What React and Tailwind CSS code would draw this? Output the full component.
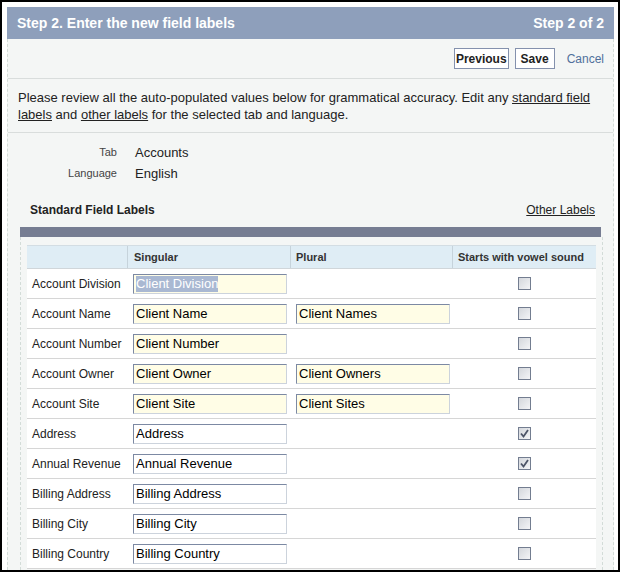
import React from 'react';

const rows = [
    {label: 'Account Division', singular: 'Client Division', plural: null, yellow: true, selected: true},
    {label: 'Account Name', singular: 'Client Name', plural: 'Client Names', yellow: true},
    {label: 'Account Number', singular: 'Client Number', plural: null, yellow: true},
    {label: 'Account Owner', singular: 'Client Owner', plural: 'Client Owners', yellow: true},
    {label: 'Account Site', singular: 'Client Site', plural: 'Client Sites', yellow: true},
    {label: 'Address', singular: 'Address', plural: null, checked: true},
    {label: 'Annual Revenue', singular: 'Annual Revenue', plural: null, checked: true},
    {label: 'Billing Address', singular: 'Billing Address', plural: null},
    {label: 'Billing City', singular: 'Billing City', plural: null},
    {label: 'Billing Country', singular: 'Billing Country', plural: null},
];

function TextBox({value, yellow, selected}) {
    return (
        <div
            className={`w-[154px] h-[20px] flex items-center pl-[2px] text-[13px] text-black border border-t-[#7c89a3] border-l-[#7c89a3] border-r-[#ccd3dc] border-b-[#ccd3dc] ${yellow ? 'bg-[#fffde6]' : 'bg-white'}`}>
            {selected
                ? <span className="bg-[#a9b8d2] text-white leading-[16px]">{value}</span>
                : <span>{value}</span>}
        </div>
    );
}

function Checkbox({checked}) {
    return (
        <div className="w-[13px] h-[13px] border border-[#737d90] bg-gradient-to-br from-[#d4d7dc] to-[#f4f5f7] flex items-center justify-center">
            {checked && (
                <svg width="9" height="9" viewBox="0 0 9 9">
                    <path d="M1 4.5 L3.5 7.5 L8 1" fill="none" stroke="#4d5568" strokeWidth="1.8"/>
                </svg>
            )}
        </div>
    );
}

export default function App() {
    return (
        <div
            className="w-[620px] h-[572px] border-2 border-black bg-white pt-[5px] pl-[5px] pr-[4px] flex flex-col overflow-hidden"
            style={{fontFamily: '"Liberation Sans", Arial, sans-serif'}}>
            {/* Title bar */}
            <div className="h-[32px] shrink-0 bg-[#8e9fbb] flex items-center justify-between px-[10px] text-white font-bold text-[14px]">
                <span>Step 2. Enter the new field labels</span>
                <span>Step 2 of 2</span>
            </div>

            {/* Body */}
            <div className="flex-1 bg-[#f4f6f5] border-l border-r border-dashed border-[#d3dcd8] flex flex-col overflow-hidden">
                {/* Buttons */}
                <div className="h-[40px] shrink-0 flex items-center justify-end pr-[9px] border-b border-[#d9dddc]">
                    <button className="h-[21px] px-[1px] bg-white border border-[#8491ad] text-[12px] font-bold text-[#222]">Previous</button>
                    <button className="ml-[6px] h-[21px] px-[5px] bg-white border border-[#8491ad] text-[12px] font-bold text-[#222]">Save</button>
                    <span className="ml-[12px] text-[12px] text-[#50709b]">Cancel</span>
                </div>

                {/* Description */}
                <div className="shrink-0 pl-[10px] pr-[14px] pt-[10px] pb-[9px] text-[13px] leading-[17px] text-[#222] border-b border-[#d9dddc]">
                    Please review all the auto-populated values below for grammatical accuracy. Edit any{' '}
                    <span className="underline">standard field labels</span> and{' '}
                    <span className="underline">other labels</span> for the selected tab and language.
                </div>

                {/* Tab / Language */}
                <div className="pt-[11px] flex flex-col gap-[4px]">
                    <div className="flex items-center h-[17px]">
                        <span className="w-[109px] text-right text-[11px] text-[#444]">Tab</span>
                        <span className="ml-[18px] text-[13px] text-[#222]">Accounts</span>
                    </div>
                    <div className="flex items-center h-[17px]">
                        <span className="w-[109px] text-right text-[11px] text-[#444]">Language</span>
                        <span className="ml-[18px] text-[13px] text-[#222]">English</span>
                    </div>
                </div>

                {/* Section header */}
                <div className="mt-[20px] flex items-center justify-between pl-[22px] pr-[18px] h-[16px]">
                    <span className="text-[12px] font-bold text-[#222]">Standard Field Labels</span>
                    <span className="text-[12px] underline text-[#222]">Other Labels</span>
                </div>

                {/* Table block */}
                <div className="ml-[12px] w-[583px] mt-[9px] flex flex-col flex-1">
                    <div className="h-[10px] w-[581px] bg-[#767d92]"/>
                    <div className="flex-1 border-l border-r border-dashed border-[#d3dcd8] pt-[8px] pl-[6px]">
                        <div className="w-[569px] bg-white border-t border-[#d3dde3]">
                            {/* Header */}
                            <div className="flex h-[23px] bg-[#dfedf5] text-[11px] font-bold text-[#333] border-b border-[#d0d6da]">
                                <div className="w-[101px] border-r border-[#c6d3db]"/>
                                <div className="w-[163px] border-r border-[#c6d3db] flex items-center pl-[6px]">Singular</div>
                                <div className="w-[162px] border-r border-[#c6d3db] flex items-center pl-[5px]">Plural</div>
                                <div className="flex-1 flex items-center pl-[5px]">Starts with vowel sound</div>
                            </div>
                            {rows.map((r, i) => (
                                <div key={i} className="flex h-[30px] items-center border-b border-[#d6d6d6]">
                                    <div className="w-[101px] pl-[5px] text-[12px] text-[#222]">{r.label}</div>
                                    <div className="w-[163px] pl-[5px]">
                                        <TextBox value={r.singular} yellow={r.yellow} selected={r.selected}/>
                                    </div>
                                    <div className="w-[162px] pl-[5px]">
                                        {r.plural && <TextBox value={r.plural} yellow={r.yellow}/>}
                                    </div>
                                    <div className="flex-1 flex justify-center">
                                        <Checkbox checked={r.checked}/>
                                    </div>
                                </div>
                            ))}
                        </div>
                    </div>
                </div>
            </div>
        </div>
    );
}
